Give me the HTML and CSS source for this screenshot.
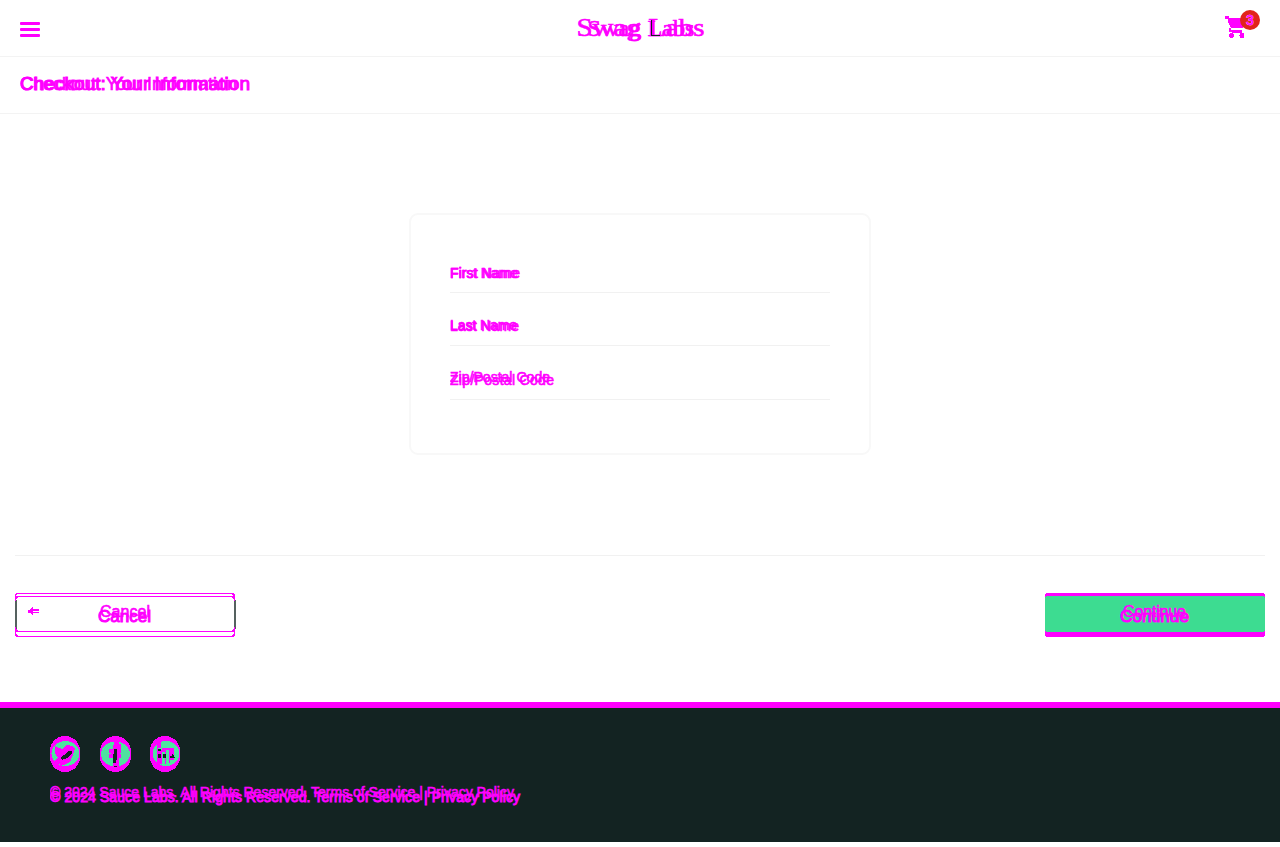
FILE: index.html
```html
<!DOCTYPE html>
<html lang="en">
<head>
<meta charset="utf-8">
<title>Swag Labs</title>
<link rel="stylesheet" href="styles.css">
</head>
<body>
<header class="topbar">
  <div class="menu"><i></i><i></i><i></i></div>
  <svg class="title" width="140" height="56"><text x="5.500" y="36" font-size="26" textLength="128" lengthAdjust="spacingAndGlyphs">Swag Labs</text><text x="16.500" y="36" font-size="24" textLength="107" lengthAdjust="spacingAndGlyphs">Swag Labs</text><path class="dark" d="M80 20h1v15h8v1h-9z"/></svg>
  <svg class="cart" width="40" height="40">
    <path d="M3 8h4v2h14v10h-12L6 14V11H3zM7 20h2v1.500h11v3.500H9.500v-1H7z"/><circle cx="9.500" cy="27.500" r="2.500"/><circle cx="20" cy="27.500" r="2.500"/>
    <circle class="badge" cx="28" cy="12" r="10"/><text class="halo" x="24" y="17" font-size="14">3</text><text x="24" y="16.500" font-size="14">3</text>
  </svg>
</header>
<div class="subbar"><svg width="300" height="56"><text x="20" y="33" font-size="18" textLength="217" lengthAdjust="spacingAndGlyphs">Checkout: Your Information</text><text class="heavy" x="20" y="33" font-size="18" textLength="230" lengthAdjust="spacingAndGlyphs">Checkout: Your Information</text></svg></div>
<main>
  <form class="card">
    <div class="field"><svg width="200" height="30"><text x="0" y="16" font-size="14" textLength="68">First Name</text><text x="0" y="16" font-size="14" textLength="70">First Name</text></svg></div>
    <div class="field"><svg width="200" height="30"><text x="0" y="15" font-size="14" textLength="67">Last Name</text><text x="0" y="16" font-size="14" textLength="69">Last Name</text></svg></div>
    <div class="field"><svg width="200" height="30"><text x="0" y="12.500" font-size="14" textLength="100">Zip/Postal Code</text><text x="0" y="16" font-size="14" textLength="104">Zip/Postal Code</text></svg></div>
  </form>
  <div class="actions">
    <svg width="222" height="46">
      <path class="side" d="M1.500 7v29M220.500 7v29"/>
      <rect class="outline" x="1.500" y="0.500" width="219" height="38" rx="3"/><rect class="outline" x="1.500" y="3.500" width="219" height="40" rx="3"/>
      <path class="side" d="M1.500 8v26M220.500 8v26"/><path d="M14 17h2l3-4v3h6v1.500h-6v1h6V20h-6v3l-3-3h-2z"/>
      <text x="86" y="24" font-size="16" textLength="50">Cancel</text><text class="heavy" x="84" y="29" font-size="16" textLength="53" lengthAdjust="spacingAndGlyphs">Cancel</text>
    </svg>
    <svg width="222" height="46">
      <rect x="0.500" y="0" width="220.500" height="44" rx="3"/><rect class="fill" x="1" y="3" width="220" height="36" rx="3"/>
      <text x="79" y="24" font-size="16" textLength="63">Continue</text><text class="heavy" x="76" y="29" font-size="16" textLength="69" lengthAdjust="spacingAndGlyphs">Continue</text>
    </svg>
  </div>
</main>
<footer class="footer">
  <div class="social">
    <svg width="30" height="36"><rect width="30" height="36" rx="15"/><ellipse class="mint" cx="15.500" cy="17.500" rx="14" ry="12.500"/><path d="M5 10l7 3 5-4 5 1 3 2-2 7-3 7-6 3-8-1-1-4 3-2-3-5z"/><path class="dark" d="M10 22l4-3 4-4h4v3l-5 4-5 2z"/></svg>
    <svg width="32" height="36"><rect width="31" height="36" rx="15.500"/><ellipse class="mint" cx="15.500" cy="18" rx="14.500" ry="12.500"/><path d="M13 11l2-6h4v3h2v9h-1v1h1v4h-2v9h-6v-9H9v-4h2v-1H9v-4h4z"/><path class="dark" d="M14 13h3v11h-1v3h-3v-9h1zM14 30h3v1h-3z"/></svg>
    <svg width="30" height="36"><rect width="30" height="36" rx="15"/><ellipse class="mint" cx="16" cy="17.500" rx="13.500" ry="12.500"/><path d="M7 7l4-1v6h-3v2h4v-2h12v12h-4v3h-1V14h-3v14h-1V16h-3v12H7z"/><path class="dark" d="M8 13h3v2H8zM8 18h3v4H8zM13 18h3v4h-3zM20 20h2v-2h1l2 4h-5z"/></svg>
  </div>
  <svg class="copy" width="500" height="35"><text x="0" y="17.500" font-size="14" textLength="464">© 2024 Sauce Labs. All Rights Reserved. Terms of Service | Privacy Policy</text><text class="heavy" x="0" y="23" font-size="14" textLength="470">© 2024 Sauce Labs. All Rights Reserved. Terms of Service | Privacy Policy</text></svg>
</footer>
</body>
</html>
```

FILE: styles.css
```css
* { box-sizing: border-box; }
body { margin: 0; height: 847px; background: #fff; font-family: "Liberation Sans", Arial, sans-serif; }
svg { display: block; fill: #f0f; shape-rendering: crispEdges; }
text { stroke: #f0f; stroke-width: .6px; }
.heavy { stroke-width: 1px; }
.topbar { height: 57px; border-bottom: 1px solid #f3f3f3; display: grid; grid-template-columns: 1fr 140px 1fr; padding: 0 19px 0 20px; }
.menu { display: flex; flex-direction: column; gap: 3px; padding-top: 22px; }
.menu i { width: 20px; height: 3px; border-radius: 1px; background: #f0f; }
.title { font-family: "Liberation Serif", serif; }
.cart { justify-self: end; margin: 8px -1px 0 0; }
.badge { fill: #e2231a; shape-rendering: auto; }
.halo { fill: #fff; stroke: #fff; }
.subbar { height: 57px; border-bottom: 1px solid #f3f3f3; }
main { height: 588px; padding: 99px 15px 0; }
.card { width: 462px; height: 242px; margin: 0 auto; border: 2px solid #f8f8f8; border-radius: 9px; padding: 47px 39px 0; }
.field { height: 53.500px; }
.field:first-child { height: 53px; }
.field svg { width: 380px; height: 31px; border-bottom: 1px solid #f1f1f1; }
.actions { border-top: 1px solid #f1f1f1; height: 150px; margin-top: 100px; padding-top: 37px; display: flex; justify-content: space-between; }
.actions svg { margin: 0 -1px; }
.outline { fill: none; stroke: #f0f; stroke-width: 1.500px; }
.side { stroke: #55615f; stroke-width: 2px; }
.fill { fill: #3ddc91; }
.footer { height: 140px; background: #132322; border-top: 6px solid #f0f; padding: 28px 50px 0; }
.social { display: flex; }
.social svg + svg { margin-left: 20px; }
.social svg:last-child { margin-left: 18px; }
.mint { fill: #4fe2a0; }
.dark { fill: #132322; }
.copy { margin-top: 7px; }
```
